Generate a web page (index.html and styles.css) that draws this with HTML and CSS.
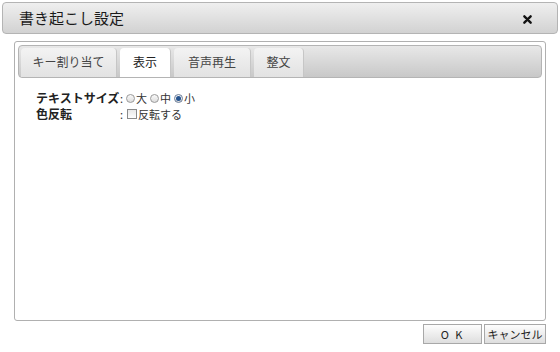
FILE: index.html
```html
<!DOCTYPE html>
<html lang="ja">
<head>
    <meta charset="UTF-8">
    <title>書き起こし設定</title>
    <link rel="stylesheet" href="styles.css">
</head>
<body>
<div class="dialog">
    <div class="titlebar">
        <div class="title">書き起こし設定</div>
        <div class="close">
            <svg width="9" height="9" viewBox="0 0 10 10">
                <path d="M1.5 1.5L8.5 8.5M8.5 1.5L1.5 8.5" stroke="#111" stroke-width="2.6" stroke-linecap="round"/>
            </svg>
        </div>
    </div>
    <div class="panel">
        <div class="tabs">
            <div class="tab t1">キー割り当て</div>
            <div class="tab t2 on">表示</div>
            <div class="tab t3">音声再生</div>
            <div class="tab t4">整文</div>
        </div>
        <div class="setting">
            <div class="lbl">テキストサイズ</div>
            <div class="row">:<span class="radio"></span>大<span class="radio"></span>中<span class="radio checked"></span>小</div>
            <div class="lbl">色反転</div>
            <div class="row">:<span class="check"></span>反転する</div>
        </div>
    </div>
    <div class="buttons">
        <div class="btn ok">O K</div>
        <div class="btn">キャンセル</div>
    </div>
</div>
</body>
</html>
```

FILE: styles.css
```css
*{
    box-sizing: border-box;
}
html,body{
    margin:0;
    padding:0;
    background:#fff;
    font-family: "Noto Sans CJK JP", "Liberation Sans", sans-serif;
    color:#222;
}
.dialog{
    width:560px;
    height:352px;
    padding-top:2px;
}
.titlebar{
    margin:0 2px;
    height:32px;
    border:1px solid #b4b4b4;
    border-radius:4px;
    background:linear-gradient(#efefef,#d2d2d2);
    display:flex;
    align-items:center;
    justify-content:space-between;
    padding:0 25px 0 16px;
}
.title{
    font-size:15px;
    line-height:20px;
    color:#1a1a1a;
}
.close{
    display:flex;
    margin-top:2px;
}
.panel{
    margin:7px 14px 0 14px;
    height:280px;
    border:1px solid #b0b0b0;
    border-radius:3px;
    padding:3px 3px 0 3px;
}
.tabs{
    height:33px;
    border:1px solid #b4b4b4;
    border-radius:4px;
    background:linear-gradient(#e8e8e8,#c8c8c8);
    display:flex;
    align-items:flex-end;
    gap:3px;
    padding-left:2px;
}
.tab{
    height:29px;
    font-size:12px;
    line-height:28px;
    text-align:center;
    color:#444;
    border-radius:4px 4px 0 0;
    background:linear-gradient(#f3f3f3,#e2e2e2);
    border-right:1px solid #c6c6c6;
}
.t1{ width:96px; }
.t2{ width:51px; }
.t3{ width:77px; }
.t4{ width:50px; }
.tab.on{
    background:#fff;
    color:#222;
}
.setting{
    display:grid;
    grid-template-columns:84px auto;
    padding:12px 0 0 18px;
    font-size:11px;
    line-height:16px;
}
.lbl{
    font-weight:bold;
    font-size:12px;
}
.row{
    display:flex;
    align-items:center;
    color:#333;
}
.radio{
    width:9px;
    height:9px;
    border:1px solid #9a9a9a;
    border-radius:50%;
    background:linear-gradient(#fafafa,#dcdcdc);
    margin:0 1px 0 3px;
    position:relative;
}
.radio.checked{
    border-color:#6b7d98;
}
.radio.checked:after{
    content:'';
    position:absolute;
    left:1px;
    top:1px;
    width:5px;
    height:5px;
    border-radius:50%;
    background:#24538f;
}
.check{
    width:10px;
    height:10px;
    border:1px solid #8a8a8a;
    background:linear-gradient(#e8e8e8,#fdfdfd);
    margin:0 1px 0 4px;
}
.buttons{
    display:flex;
    justify-content:flex-end;
    gap:2px;
    padding:3px 14px 0 0;
}
.btn{
    height:20px;
    width:62px;
    border:1px solid #a8a8a8;
    background:linear-gradient(#fdfdfd,#dedede);
    font-size:11px;
    line-height:18px;
    text-align:center;
    color:#222;
}
.btn.ok{
    width:59px;
    letter-spacing:2px;
}
```
